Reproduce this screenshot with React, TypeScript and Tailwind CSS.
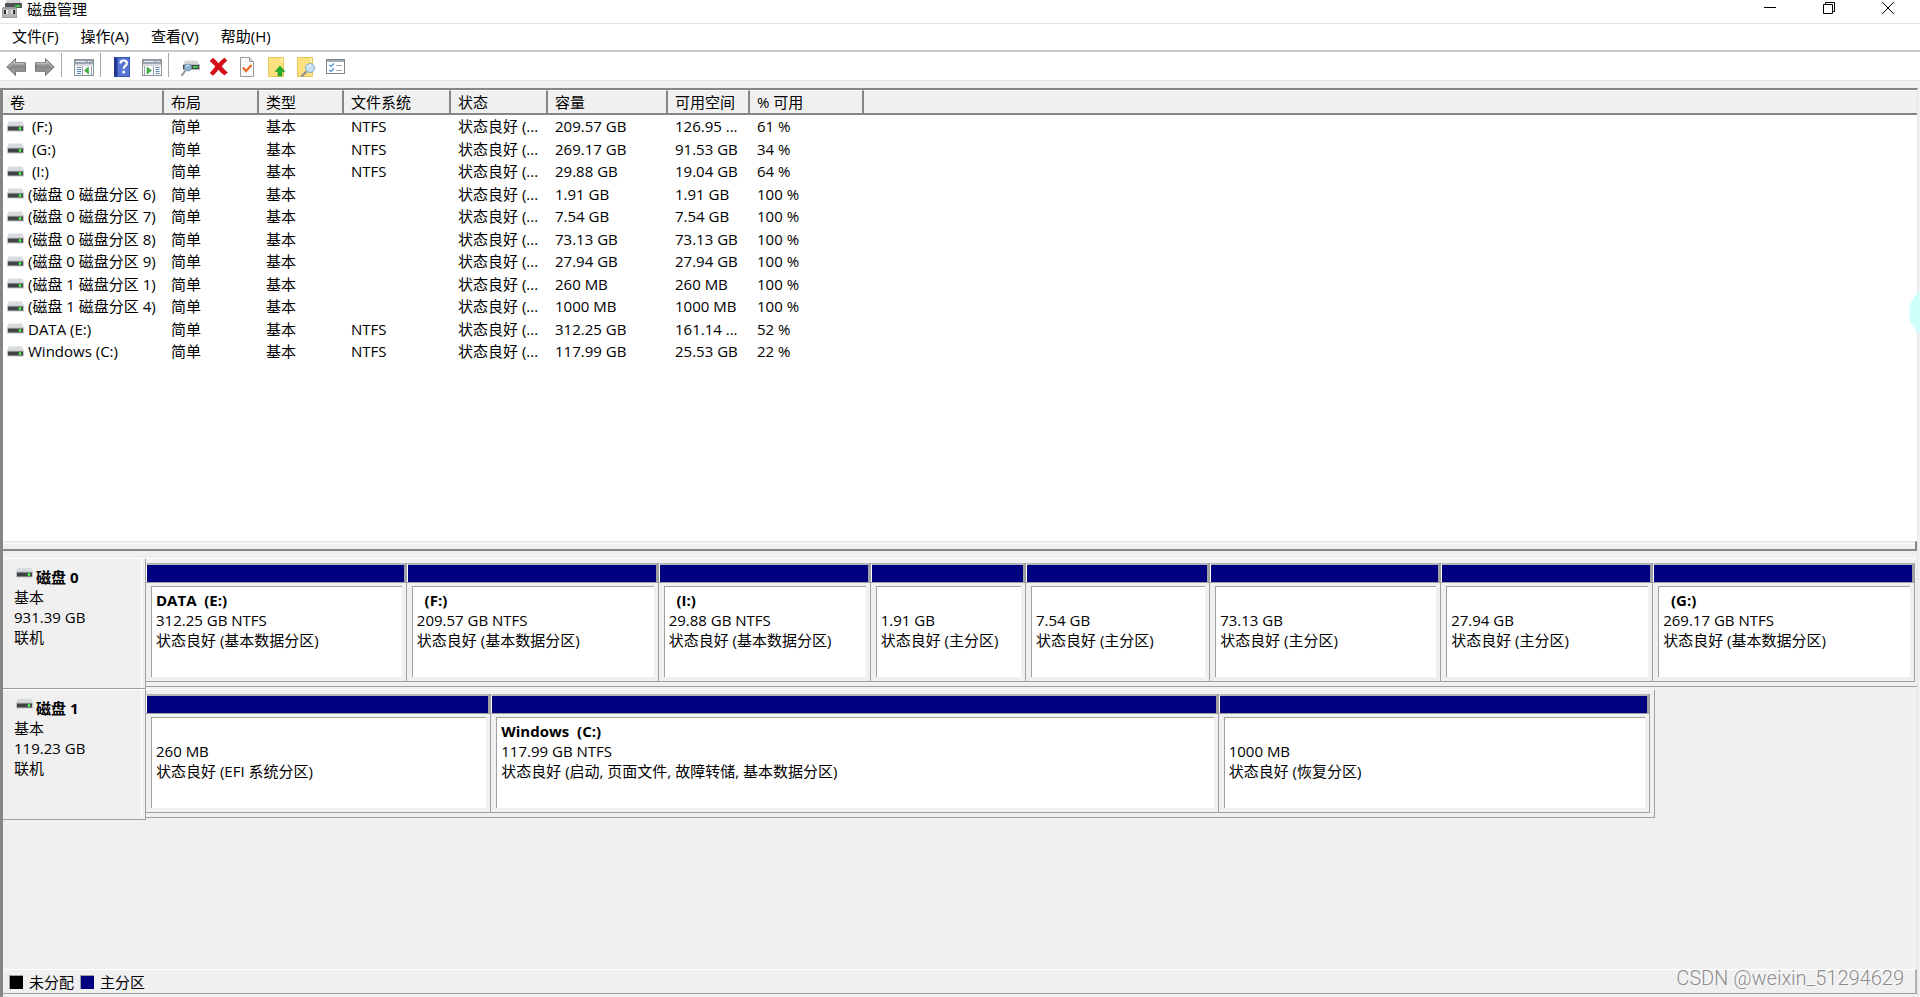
import type { ReactNode } from "react";

interface Volume {
  name: string;
  fs: string;
  capacity: string;
  free: string;
  percent: string;
}

interface Partition {
  name: string;
  size: string;
  status: string;
  span: number;
}

interface Disk {
  name: string;
  size: string;
  span: number;
  partitions: Partition[];
}

const volumes: Volume[] = [
  { name: " (F:)", fs: "NTFS", capacity: "209.57 GB", free: "126.95 ...", percent: "61 %" },
  { name: " (G:)", fs: "NTFS", capacity: "269.17 GB", free: "91.53 GB", percent: "34 %" },
  { name: " (I:)", fs: "NTFS", capacity: "29.88 GB", free: "19.04 GB", percent: "64 %" },
  { name: "(磁盘 0 磁盘分区 6)", fs: "", capacity: "1.91 GB", free: "1.91 GB", percent: "100 %" },
  { name: "(磁盘 0 磁盘分区 7)", fs: "", capacity: "7.54 GB", free: "7.54 GB", percent: "100 %" },
  { name: "(磁盘 0 磁盘分区 8)", fs: "", capacity: "73.13 GB", free: "73.13 GB", percent: "100 %" },
  { name: "(磁盘 0 磁盘分区 9)", fs: "", capacity: "27.94 GB", free: "27.94 GB", percent: "100 %" },
  { name: "(磁盘 1 磁盘分区 1)", fs: "", capacity: "260 MB", free: "260 MB", percent: "100 %" },
  { name: "(磁盘 1 磁盘分区 4)", fs: "", capacity: "1000 MB", free: "1000 MB", percent: "100 %" },
  { name: "DATA (E:)", fs: "NTFS", capacity: "312.25 GB", free: "161.14 ...", percent: "52 %" },
  { name: "Windows (C:)", fs: "NTFS", capacity: "117.99 GB", free: "25.53 GB", percent: "22 %" },
];

// span is the relative width of a block in the graphical view
const disks: Disk[] = [
  {
    name: "磁盘 0",
    size: "931.39 GB",
    span: 1771,
    partitions: [
      { name: "DATA  (E:)", size: "312.25 GB NTFS", status: "状态良好 (基本数据分区)", span: 261 },
      { name: "  (F:)", size: "209.57 GB NTFS", status: "状态良好 (基本数据分区)", span: 252 },
      { name: "  (I:)", size: "29.88 GB NTFS", status: "状态良好 (基本数据分区)", span: 212 },
      { name: "", size: "1.91 GB", status: "状态良好 (主分区)", span: 155 },
      { name: "", size: "7.54 GB", status: "状态良好 (主分区)", span: 184 },
      { name: "", size: "73.13 GB", status: "状态良好 (主分区)", span: 231 },
      { name: "", size: "27.94 GB", status: "状态良好 (主分区)", span: 212 },
      { name: "  (G:)", size: "269.17 GB NTFS", status: "状态良好 (基本数据分区)", span: 262 },
    ],
  },
  {
    name: "磁盘 1",
    size: "119.23 GB",
    span: 1508,
    partitions: [
      { name: "", size: "260 MB", status: "状态良好 (EFI 系统分区)", span: 345 },
      { name: "Windows  (C:)", size: "117.99 GB NTFS", status: "状态良好 (启动, 页面文件, 故障转储, 基本数据分区)", span: 728 },
      { name: "", size: "1000 MB", status: "状态良好 (恢复分区)", span: 431 },
    ],
  },
];

const columns = [
  { label: "卷", width: "w-[161px]" },
  { label: "布局", width: "w-[95px]" },
  { label: "类型", width: "w-[85px]" },
  { label: "文件系统", width: "w-[107px]" },
  { label: "状态", width: "w-[97px]" },
  { label: "容量", width: "w-[120px]" },
  { label: "可用空间", width: "w-[82px]" },
  { label: "% 可用", width: "w-[114px]" },
];

const menus = ["文件(F)", "操作(A)", "查看(V)", "帮助(H)"];

function DriveIcon() {
  return (
    <svg width="17" height="11" viewBox="0 0 17 11" className="shrink-0" aria-hidden="true">
      <path d="M2 0h13l2 5H0z" fill="#d9dcdf" />
      <path d="M2 0h13l.4 1H1.6z" fill="#e9ebed" />
      <rect x="0" y="4.5" width="17" height="6" fill="#c2c4c6" />
      <rect x="1" y="5.5" width="15" height="4" fill="#414445" />
      <rect x="11" y="7" width="4" height="1" fill="#2fae3a" />
      <rect x="12" y="6" width="2" height="3" fill="#4be04f" />
    </svg>
  );
}

function AppIcon() {
  return (
    <svg width="20" height="18" viewBox="0 0 20 18" className="shrink-0" aria-hidden="true">
      <path d="M5 0h13l2 4H3z" fill="#d4d6d8" />
      <rect x="3" y="3" width="17" height="5" rx="1" fill="#505355" />
      <rect x="13" y="5" width="5" height="2" fill="#2fae3a" />
      <rect x="15" y="5" width="2" height="2" fill="#4be04f" />
      <path d="M0 9q0-2 2-2h11q2 0 2 2v9H0z" fill="#9b9d9f" />
      <rect x="1" y="9" width="13" height="8" fill="#b4b6b8" />
      <rect x="2" y="10" width="2" height="4" fill="#303234" />
      <rect x="4" y="10" width="2" height="4" fill="#e6e6e6" />
      <rect x="11" y="10" width="2" height="4" fill="#303234" />
      <rect x="9" y="10" width="2" height="4" fill="#e6e6e6" />
    </svg>
  );
}

function ArrowIcon({ flip }: { flip?: boolean }) {
  return (
    <svg width="20" height="20" viewBox="0 0 20 20" className={flip ? "-scale-x-100" : ""} aria-hidden="true">
      <defs>
        <linearGradient id="arrowFill" x1="0" y1="0" x2="0" y2="1">
          <stop offset="0" stopColor="#b4b4b4" />
          <stop offset="0.5" stopColor="#8a8a8a" />
          <stop offset="1" stopColor="#a8a8a8" />
        </linearGradient>
      </defs>
      <path d="M.8 10 9.500 1.500v4.200h10v8.600h-10v4.200z" fill="url(#arrowFill)" stroke="#747474" strokeLinejoin="round" />
      <path d="M2.500 10 8.500 4v2.800h10" fill="none" stroke="#c9c9c9" />
    </svg>
  );
}

function PaneIcon({ side }: { side: "left" | "right" }) {
  return (
    <svg width="20" height="20" viewBox="0 0 20 20" aria-hidden="true">
      <rect x=".5" y="2.500" width="19" height="16" fill="#fbfbfb" stroke="#8b939b" />
      <rect x="1" y="3" width="18" height="4" fill="#9aa5b1" />
      <path d="M2 4.500h10" stroke="#e2e8ee" />
      <path d="M14 4.500h1M16.500 4.500h1" stroke="#fff" />
      <rect x="1" y="7" width="18" height="2" fill="#d7dbe0" />
      {side === "left" ? (
        <g>
          <path d="M3 10.500h4M3 12.500h4M3 14.500h4M3 16.500h4" stroke="#5d87b5" />
          <path d="M8.500 9v9M17.500 9v9" stroke="#9aa5b1" />
          <path d="M14.500 10v7L10.500 13.500z" fill="#3fb33a" stroke="#2f9030" strokeWidth=".5" />
        </g>
      ) : (
        <g>
          <path d="M13.500 10.500h4M13.500 12.500h4M13.500 14.500h4M13.500 16.500h4" stroke="#5d87b5" />
          <path d="M11.500 9v9M2.500 9v9" stroke="#9aa5b1" />
          <path d="M5 10v7l4.500-3.500z" fill="#3fb33a" stroke="#2f9030" strokeWidth=".5" />
        </g>
      )}
    </svg>
  );
}

function HelpIcon() {
  return (
    <svg width="20" height="20" viewBox="0 0 20 20" aria-hidden="true">
      <rect x="1" y="0" width="16" height="20" fill="#2c4aa8" />
      <rect x="4.500" y=".5" width="12" height="19" fill="#5576d2" stroke="#3756b8" />
      <rect x="1" y="0" width="3" height="20" fill="#22398c" />
      <path d="M7.500 6.500q0-3 3.200-3t3.200 2.800q0 1.700-1.700 2.700-1.400.8-1.400 2.800" fill="none" stroke="#fff" strokeWidth="2.200" />
      <circle cx="10.700" cy="15" r="1.500" fill="#fff" />
    </svg>
  );
}

function RescanIcon() {
  return (
    <svg width="20" height="20" viewBox="0 0 20 20" aria-hidden="true">
      <path d="M4 3.500h12l2 4H2z" fill="#d5d8db" />
      <rect x="2" y="7" width="17" height="6" fill="#b5b8ba" />
      <rect x="2" y="8" width="16" height="4" fill="#454849" />
      <rect x="12" y="9" width="5" height="2" fill="#41cf48" />
      <path d="m4.500 13.500-4 5.500" stroke="#8d9499" strokeWidth="2" />
      <circle cx="7" cy="10.500" r="3.500" fill="#8fb6d6" stroke="#7b9cb8" />
      <path d="M5 9.500q1-1.500 3-1" fill="none" stroke="#e8f4fd" />
    </svg>
  );
}

function DeleteIcon() {
  return (
    <svg width="20" height="20" viewBox="0 0 20 20" aria-hidden="true">
      <path d="m0 4 3-3q3 2.500 5.500 5.500Q11 3.500 14.500 1L17 3.500q-3.500 3-5.500 6 2.500 3 6 6L14.500 18q-3.500-2-6-5.500-2.500 3-5.500 6L0 16q3-3 5.500-6.500Q3 6.500 0 4z" fill="#d80c18" stroke="#b90a14" strokeWidth=".5" />
    </svg>
  );
}

function CheckIcon() {
  return (
    <svg width="20" height="20" viewBox="0 0 20 20" aria-hidden="true">
      <path d="M1.500.5h9l4 4v15h-13z" fill="#fafafa" stroke="#9a9a9a" />
      <path d="M10.500.5v4h4" fill="#ddd" stroke="#9a9a9a" />
      <path d="m4 10.500 3 3.500 5.500-6" fill="none" stroke="#ee6a2c" strokeWidth="2.200" />
    </svg>
  );
}

function FolderIcon({ kind }: { kind: "up" | "search" }) {
  return (
    <svg width="20" height="20" viewBox="0 0 20 20" aria-hidden="true">
      <path d="M.5.5h15v19H.5z" fill="#fbe17f" stroke="#e6c455" />
      <path d="M13 1h2v4h-2z" fill="#fff0b0" />
      {kind === "up" ? (
        <path d="m12 9 5 5.500h-3V19h-4v-4.500H7z" fill="#22ad2a" stroke="#1a8f22" strokeWidth=".5" />
      ) : (
        <g>
          <path d="m9.500 14.500-5 5" stroke="#8b9094" strokeWidth="2.200" />
          <circle cx="13" cy="11" r="4.500" fill="#c4e0f2" stroke="#86a8bf" />
          <path d="M11 10q.5-2 3-2" fill="none" stroke="#fff" />
        </g>
      )}
    </svg>
  );
}

function ListIcon() {
  return (
    <svg width="20" height="20" viewBox="0 0 20 20" aria-hidden="true">
      <rect x=".5" y="2.500" width="18" height="14" fill="#fff" stroke="#7d858c" />
      <rect x="1" y="3" width="17" height="2" fill="#a3abb3" />
      <path d="m3.500 8 1.500 1.500L8 6.500M3.500 13l1.500 1.500 3-3" fill="none" stroke="#3d8fd6" strokeWidth="1.200" />
      <path d="M10 8.500h6M10 13.500h6" stroke="#a3abb3" />
    </svg>
  );
}

function ToolButton({ label, children }: { label: string; children: ReactNode }) {
  return (
    <button type="button" aria-label={label} className="mr-[9px] size-5 shrink-0">
      {children}
    </button>
  );
}

function Separator() {
  return <div className="-ml-[3px] mr-3 h-6 w-px bg-[#a9a9a9]" />;
}

function PartitionBlock({ part }: { part: Partition }) {
  return (
    <button
      type="button"
      className="flex min-w-0 basis-0 flex-col border-r border-b border-[#a0a0a0] text-left"
      style={{ flexGrow: part.span }}
    >
      <span className="flex h-5 w-full border-b border-[#a0a0a0]">
        <span className="flex-1 border-t-2 border-r-2 border-l border-t-[#b4b4b8] border-r-[#a0a0a0] border-l-white bg-[#000080]" />
      </span>
      <span className="flex w-full flex-1 pt-[3px] pr-1 pb-1 pl-[5px]">
        <span className="min-w-0 flex-1 overflow-hidden border-t border-l border-[#a0a0a0] bg-white pt-[3px] pl-1 whitespace-pre">
          <span className="block h-5 font-bold">{part.name}</span>
          <span className="block h-5">{part.size}</span>
          <span className="block h-5">{part.status}</span>
        </span>
      </span>
    </button>
  );
}

function DiskRow({ disk, total }: { disk: Disk; total: number }) {
  return (
    <div className="flex h-[131px]">
      <div className="w-[143px] shrink-0 border-t border-r border-b border-t-white border-r-[#a0a0a0] border-b-[#a0a0a0]">
        <div className="mr-[3px] h-full border-r border-white pt-2 pl-[11px]">
          <div className="flex h-5 pl-[2px] font-bold">
            <DriveIcon />
            <span className="pl-[3px]">{disk.name}</span>
          </div>
          <div className="h-5">基本</div>
          <div className="h-5">{disk.size}</div>
          <div className="h-5">联机</div>
        </div>
      </div>
      <div
        className={`mb-[2px] flex min-w-0 basis-0 border-t border-b border-t-white border-b-[#a0a0a0] pt-1 pb-1 ${
          disk.span < total ? "border-r border-r-[#a0a0a0] pr-1" : "pr-[2px]"
        }`}
        style={{ flexGrow: disk.span }}
      >
        {disk.partitions.map((part, i) => (
          <PartitionBlock key={i} part={part} />
        ))}
      </div>
      {disk.span < total && <div className="basis-0" style={{ flexGrow: total - disk.span }} />}
    </div>
  );
}

export default function App() {
  return (
    <div className="relative flex min-h-screen flex-col overflow-hidden bg-[#f0f0f0] font-['Open_Sans','Noto_Sans_CJK_SC',sans-serif] text-[15px] leading-5 text-black">
      <header className="flex h-6 items-start border-b border-[#e5e5e5] bg-white">
        <div className="flex flex-1 gap-[5px] pl-[2px]">
          <AppIcon />
          <h1 className="-mt-px">磁盘管理</h1>
        </div>
        <div className="flex pr-[3px]">
          <button type="button" aria-label="最小化" className="flex w-[59px] justify-center pt-[2px]">
            <svg width="12" height="12" viewBox="0 0 12 12"><path d="M0 5.500h12" stroke="#000" /></svg>
          </button>
          <button type="button" aria-label="还原" className="flex w-[59px] justify-center pt-[2px]">
            <svg width="12" height="12" viewBox="0 0 12 12"><path d="M.5 2.500h9v9h-9zM2.500 2.500v-2h9v9h-2" fill="none" stroke="#000" /></svg>
          </button>
          <button type="button" aria-label="关闭" className="flex w-[59px] justify-center pt-[2px]">
            <svg width="12" height="12" viewBox="0 0 12 12"><path d="m0 0 12 12M12 0 0 12" stroke="#000" /></svg>
          </button>
        </div>
      </header>

      <nav className="flex h-7 gap-[22px] border-b-2 border-[#c8cdd1] bg-white pt-[2px] pl-3">
        {menus.map((m) => (
          <button key={m} type="button" className="h-5">{m}</button>
        ))}
      </nav>

      <div className="flex h-[29px] items-end border-b border-[#e3e3e3] bg-white pb-[3px] pl-[6px]">
        <ToolButton label="后退"><ArrowIcon /></ToolButton>
        <ToolButton label="前进"><ArrowIcon flip /></ToolButton>
        <Separator />
        <ToolButton label="显示/隐藏控制台树"><PaneIcon side="left" /></ToolButton>
        <Separator />
        <ToolButton label="帮助"><HelpIcon /></ToolButton>
        <ToolButton label="显示/隐藏操作窗格"><PaneIcon side="right" /></ToolButton>
        <Separator />
        <ToolButton label="重新扫描磁盘"><RescanIcon /></ToolButton>
        <ToolButton label="删除"><DeleteIcon /></ToolButton>
        <ToolButton label="属性"><CheckIcon /></ToolButton>
        <ToolButton label="打开"><FolderIcon kind="up" /></ToolButton>
        <ToolButton label="浏览"><FolderIcon kind="search" /></ToolButton>
        <ToolButton label="设置"><ListIcon /></ToolButton>
      </div>

      <main className="mt-[7px] mr-[2px] flex flex-1 flex-col border-l-[3px] border-[#868686]">
        <section className="flex grow-[464] basis-0 flex-col border-t-2 border-r border-t-[#868686] border-r-[#e5e5e5]">
          <div className="flex-1 bg-white">
            <table className="w-full table-fixed border-separate border-spacing-0 text-left whitespace-pre">
              <thead>
                <tr className="h-[25px]">
                  {columns.map((c) => (
                    <th
                      key={c.label}
                      className={`${c.width} border-t border-r-2 border-b-2 border-t-white border-r-[#868686] border-b-[#868686] bg-[#f0f0f0] p-0 pl-[7px] font-normal`}
                    >
                      {c.label}
                    </th>
                  ))}
                  <th className="border-t border-b-2 border-t-white border-b-[#868686] bg-[#f0f0f0] p-0" />
                </tr>
              </thead>
              <tbody>
                {volumes.map((v) => (
                  <tr key={v.name} className="odd:h-[22px] even:h-[23px]">
                    <td className="p-0 pl-1">
                      <div className="flex h-5 items-center gap-1">
                        <DriveIcon />
                        <span>{v.name}</span>
                      </div>
                    </td>
                    <td className="p-0 pl-[7px]">简单</td>
                    <td className="p-0 pl-[7px]">基本</td>
                    <td className="p-0 pl-[7px]">{v.fs}</td>
                    <td className="p-0 pl-[7px]">状态良好 (...</td>
                    <td className="p-0 pl-[7px]">{v.capacity}</td>
                    <td className="p-0 pl-[7px]">{v.free}</td>
                    <td className="p-0 pl-[7px]">{v.percent}</td>
                    <td className="p-0" />
                  </tr>
                ))}
              </tbody>
            </table>
          </div>
          <div className="h-[10px] border-t border-r-2 border-b-2 border-t-[#e5e5e5] border-r-[#868686] border-b-[#868686]">
            <div className="mt-px h-px bg-white" />
          </div>
        </section>

        <section className="flex grow-[442] basis-0 flex-col border-r border-[#e5e5e5] pt-[7px]">
          <div className="flex-1">
            {disks.map((d) => (
              <DiskRow key={d.name} disk={d} total={1771} />
            ))}
          </div>
          <div className="mb-[3px] flex h-[25px] items-center border-t border-r-2 border-b border-t-white border-r-[#b0b0b0] border-b-[#a0a0a0] pl-[6px]">
            <span className="size-[14px] border-t border-l border-[#a0a0a0] bg-black" />
            <span className="pl-[6px]">未分配</span>
            <span className="ml-[6px] size-[14px] border-t border-l border-[#a0a0a0] bg-[#000080]" />
            <span className="pl-[6px]">主分区</span>
            <span className="ml-auto pr-[11px] pb-2 font-['Roboto',sans-serif] text-[20px] font-light text-[#8c8c8c] [text-shadow:-1px_-1px_0_#fff]">
              CSDN @weixin_51294629
            </span>
          </div>
        </section>
      </main>

      <div className="absolute top-[286px] -right-[42px] size-[53px] rounded-full bg-[#cffffb]" />
    </div>
  );
}
